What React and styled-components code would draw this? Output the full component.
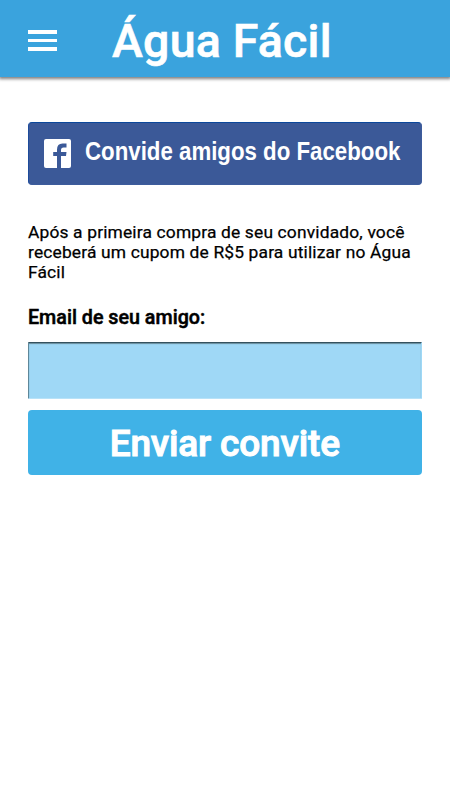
import React, { useState } from "react";
import styled, { createGlobalStyle } from "styled-components";

const GlobalStyle = createGlobalStyle`
  body {
    margin: 0;
    background-color: #fff;
    font-family: Roboto, sans-serif;
  }
`;
const Page = styled.div`
  min-height: 800px;
  background-color: #fff;
`;
const Header = styled.header`
  display: flex;
  align-items: center;
  height: 77px;
  background-color: #3aa3dd;
  box-shadow: 0 1px 3px 1px rgba(0, 0, 0, 0.5);
`;
const MenuButton = styled.button`
  display: flex;
  flex-direction: column;
  gap: 5px;
  width: 29px;
  margin: 4px 55px 0 28px;
  padding: 0;
  border: 0;
  background: none;

  & span {
    width: 29px;
    height: 3.6px;
    background-color: #fff;
  }
`;
const Title = styled.h1`
  margin: 4px 0 0;
  color: #fff;
  font-size: 46.5px;
  font-weight: 500;
  line-height: 56px;
  letter-spacing: 0.22px;
  white-space: nowrap;
  -webkit-text-stroke: 0.6px #fff;
`;
const Content = styled.main`
  display: flex;
  flex-direction: column;
  padding: 45px 28.5px 0 28px;
`;
const FacebookButton = styled.button`
  display: flex;
  align-items: center;
  box-sizing: border-box;
  height: 63px;
  padding: 0 0 0 14.5px;
  border: 1px solid #3d5c9c;
  border-top-color: #0b489b;
  border-left-color: #1d4b9b;
  border-radius: 4px;
  background-color: #3b5998;

  & svg {
    flex: none;
  }

  & span {
    margin: -5px 0 0 14.5px;
    color: #fff;
    font-family: "Liberation Sans", sans-serif;
    font-size: 26.5px;
    font-weight: 700;
    line-height: 32px;
    white-space: nowrap;
    transform: scaleX(0.84);
    transform-origin: left center;
  }
`;
const Info = styled.p`
  margin: 37px -4px 0 0;
  color: #000;
  font-size: 17.4px;
  font-weight: 400;
  line-height: 20.2px;
  letter-spacing: 0.16px;
  -webkit-text-stroke: 0.25px #000;
`;
const Label = styled.label`
  margin-top: 23px;
  color: #000;
  font-size: 19.7px;
  font-weight: 500;
  line-height: 24px;
  -webkit-text-stroke: 0.5px #000;
`;
const Input = styled.input`
  box-sizing: border-box;
  width: 100%;
  height: 57px;
  margin: 12px 0 0;
  padding: 10px;
  border: 1px solid #9fd8f6;
  border-top: 1px solid #34515e;
  border-left-color: #5e8799;
  border-bottom-color: #b8e2f8;
  border-radius: 1px;
  background-color: #9fd8f6;
  box-shadow: inset 0 1px 1px #668b9b;
  font-size: 20px;
  outline: none;
`;
const SendButton = styled.button`
  height: 65px;
  margin-top: 11px;
  padding: 3px 0 0;
  border: 0;
  border-radius: 4px;
  background-color: #40b2e7;
  color: #fff;
  font-family: Roboto, sans-serif;
  font-size: 37px;
  font-weight: 500;
  letter-spacing: -0.15px;
  white-space: nowrap;
  -webkit-text-stroke: 1px #fff;
`;

function App() {
  const [email, setEmail] = useState("");

  return (
    <Page>
      <GlobalStyle />
      <Header>
        <MenuButton type="button" aria-label="Menu">
          <span />
          <span />
          <span />
        </MenuButton>
        <Title>Água Fácil</Title>
      </Header>
      <Content>
        <FacebookButton type="button">
          <svg width="27" height="29" viewBox="0 0 27 29">
            <rect width="27" height="29" rx="2" fill="#fff" />
            <path
              d="M13 29V17H9.2V13H13V10.5Q13 4.5 18.5 4.5H22.5V8.5H19.5Q17 8.5 17 11V13H22.5L22 17H17V29Z"
              fill="#3b5998"
            />
          </svg>
          <span>Convide amigos do Facebook</span>
        </FacebookButton>
        <Info>
          Após a primeira compra de seu convidado, você receberá um cupom de R$5
          para utilizar no Água Fácil
        </Info>
        <Label htmlFor="email">Email de seu amigo:</Label>
        <Input
          id="email"
          type="email"
          value={email}
          onChange={(event) => setEmail(event.target.value)}
        />
        <SendButton type="button">Enviar convite</SendButton>
      </Content>
    </Page>
  );
}

export default App;
